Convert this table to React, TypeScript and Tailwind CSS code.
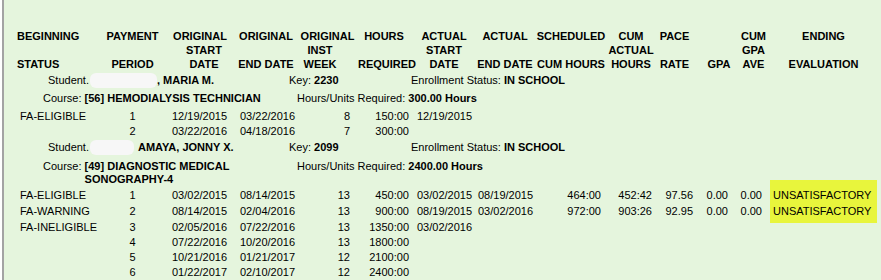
import React from "react";

const COLS =
  "grid grid-cols-[96px_65px_70px_62px_61px_55px_62px_60px_72px_48px_39px_43px_33px_107px]";

const cellCls = [
  "pl-[16px] text-left",
  "text-center",
  "pl-[7px] text-left",
  "pl-[5px] text-left",
  "pr-[8px] text-right",
  "pr-[4px] text-right",
  "pl-[4px] text-left",
  "pl-[3px] text-left",
  "pr-[6px] text-right",
  "pr-[3px] text-right",
  "pr-[1px] text-right",
  "pr-[9px] text-right",
  "pr-[8px] text-right",
  "pl-[3px] text-left",
];

type HProps = { lines: [string, string, string]; cls?: [string, string, string] };

function HeadCell({ lines, cls }: HProps) {
  const c = cls ?? ["text-center", "text-center", "text-center"];
  return (
    <div className="flex flex-col">
      {lines.map((l, i) => (
        <div key={i} className={"h-[14px] leading-[14px] whitespace-nowrap " + c[i]}>
          {l || "\u00a0"}
        </div>
      ))}
    </div>
  );
}

function Row({ cells, count }: { cells: string[]; count?: number }) {
  const n = count ?? 14;
  return (
    <>
      {Array.from({ length: n }).map((_, i) => (
        <div key={i} className={"self-center leading-[13px] whitespace-nowrap " + cellCls[i]}>
          {cells[i] ?? ""}
        </div>
      ))}
    </>
  );
}

const block1 = [
  ["FA-ELIGIBLE", "1", "12/19/2015", "03/22/2016", "8", "150:00", "12/19/2015"],
  ["", "2", "03/22/2016", "04/18/2016", "7", "300:00", ""],
];

const block2 = [
  ["FA-ELIGIBLE", "1", "03/02/2015", "08/14/2015", "13", "450:00", "03/02/2015", "08/19/2015", "464:00", "452:42", "97.56", "0.00", "0.00"],
  ["FA-WARNING", "2", "08/14/2015", "02/04/2016", "13", "900:00", "08/19/2015", "03/02/2016", "972:00", "903:26", "92.95", "0.00", "0.00"],
  ["FA-INELIGIBLE", "3", "02/05/2016", "07/22/2016", "13", "1350:00", "03/02/2016"],
  ["", "4", "07/22/2016", "10/20/2016", "13", "1800:00"],
  ["", "5", "10/21/2016", "01/21/2017", "12", "2100:00"],
  ["", "6", "01/22/2017", "02/10/2017", "12", "2400:00"],
];

export default function App() {
  return (
    <div className="w-[881px] h-[280px] overflow-hidden bg-white pl-[2px]">
      <div className="h-full border-l-2 border-[#a3a3a3] bg-[#e5f5dd] text-black text-[11px] font-['Liberation_Sans',Arial,sans-serif] pt-[29px]">
        {/* Header */}
        <div className={COLS + " font-bold"}>
          <HeadCell lines={["BEGINNING", "", "STATUS"]} cls={["pl-[13px] text-left", "pl-[13px] text-left", "pl-[13px] text-left"]} />
          <HeadCell lines={["PAYMENT", "", "PERIOD"]} />
          <HeadCell lines={["ORIGINAL", "START", "DATE"]} cls={["text-center", "pl-[8px] text-center", "pl-[8px] text-center"]} />
          <HeadCell lines={["ORIGINAL", "", "END DATE"]} />
          <HeadCell lines={["ORIGINAL", "INST", "WEEK"]} cls={["text-center", "pr-[15px] text-center", "pr-[15px] text-center"]} />
          <HeadCell lines={["HOURS", "", "REQUIRED"]} cls={["pr-[3px] text-center", "text-center", "text-center"]} />
          <HeadCell lines={["ACTUAL", "START", "DATE"]} />
          <HeadCell lines={["ACTUAL", "", "END DATE"]} />
          <HeadCell lines={["SCHEDULED", "", "CUM HOURS"]} />
          <HeadCell lines={["CUM", "ACTUAL", "HOURS"]} />
          <HeadCell lines={["PACE", "", "RATE"]} />
          <HeadCell lines={["", "", "GPA"]} cls={["text-center", "text-center", "pl-[7px] text-center"]} />
          <HeadCell lines={["CUM", "GPA", "AVE"]} />
          <HeadCell lines={["ENDING", "", "EVALUATION"]} />
        </div>

        {/* Student 1 */}
        <div className="mt-[1px] h-[16px] flex items-center whitespace-nowrap">
          <div className="w-[281px] pl-[44px] flex items-center">
            <span>Student.</span>
            <span className="inline-block ml-[1px] w-[67px] h-[15px] rounded-[6px] bg-[#f7f7f7] blur-[0.6px]" />
            <span className="font-bold">, MARIA M.</span>
          </div>
          <div className="w-[122px] pl-[4px]">
            Key: <span className="font-bold">2230</span>
          </div>
          <div className="pl-[4px]">
            Enrollment Status: <span className="font-bold">IN SCHOOL</span>
          </div>
        </div>

        {/* Course 1 */}
        <div className="pt-[4px] pb-[4px] flex items-start leading-[13px]">
          <div className="w-[289px] pl-[39px] flex items-start">
            <span className="whitespace-pre">Course: </span>
            <span className="font-bold w-[205px]">[56] HEMODIALYSIS TECHNICIAN</span>
          </div>
          <div className="pl-[4px] whitespace-nowrap">
            Hours/Units Required: <span className="font-bold">300.00 Hours</span>
          </div>
        </div>

        {/* Block 1 rows */}
        <div className={COLS + " grid-rows-[15px_15px]"}>
          {block1.map((r, i) => (
            <Row key={i} cells={r} />
          ))}
        </div>

        {/* Student 2 */}
        <div className="h-[16px] flex items-center whitespace-nowrap">
          <div className="w-[281px] pl-[44px] flex items-center">
            <span>Student.</span>
            <span className="inline-block ml-[1px] w-[44px] h-[15px] rounded-[6px] bg-[#f7f7f7] blur-[0.6px]" />
            <span className="font-bold ml-[4px]">AMAYA, JONNY X.</span>
          </div>
          <div className="w-[122px] pl-[4px]">
            Key: <span className="font-bold">2099</span>
          </div>
          <div className="pl-[4px]">
            Enrollment Status: <span className="font-bold">IN SCHOOL</span>
          </div>
        </div>

        {/* Course 2 */}
        <div className="pt-[5px] pb-[2px] flex items-start leading-[13px]">
          <div className="w-[289px] pl-[39px] flex items-start">
            <span className="whitespace-pre">Course: </span>
            <span className="font-bold w-[205px]">[49] DIAGNOSTIC MEDICAL SONOGRAPHY-4</span>
          </div>
          <div className="pl-[4px] whitespace-nowrap">
            Hours/Units Required: <span className="font-bold">2400.00 Hours</span>
          </div>
        </div>

        {/* Block 2 rows */}
        <div className={COLS + " grid-rows-[15px_16px_16px_15px_15px_15px]"}>
          <Row cells={block2[0]} count={13} />
          <div className="row-span-2 -mt-[8px] -mb-[4px] pt-[8px] pb-[4px] pl-[3px] bg-[#e8f53c] whitespace-nowrap">
            <div className="h-[15px] flex items-center">UNSATISFACTORY</div>
            <div className="h-[16px] flex items-center">UNSATISFACTORY</div>
          </div>
          <Row cells={block2[1]} count={13} />
          {block2.slice(2).map((r, i) => (
            <Row key={i} cells={r} />
          ))}
        </div>
      </div>
    </div>
  );
}
